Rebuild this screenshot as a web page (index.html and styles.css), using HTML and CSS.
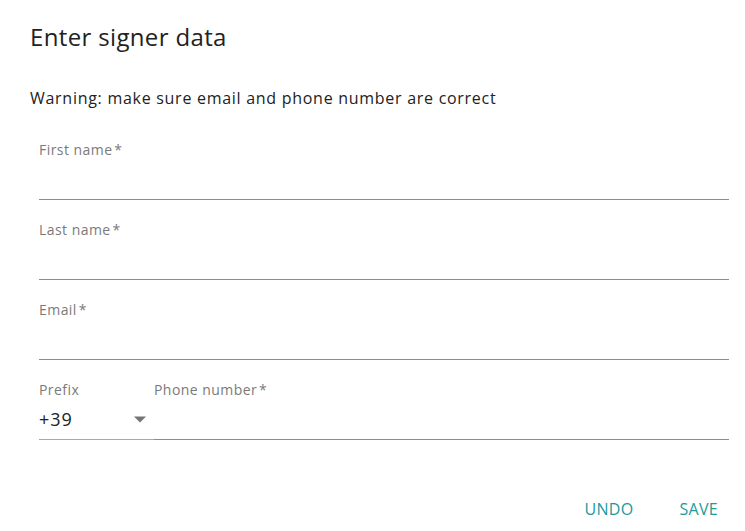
FILE: index.html
```html
<!DOCTYPE html>
<html lang="en">
<head>
<meta charset="utf-8">
<title>Enter signer data</title>
<link rel="stylesheet" href="styles.css">
</head>
<body>
<div class="dialog">
  <h1 class="title">Enter signer data</h1>
  <p class="warning">Warning: make sure email and phone number are correct</p>
  <div class="form">
    <div class="field">
      <div class="label">First name&#8202;*</div>
      <div class="input"></div>
    </div>
    <div class="field">
      <div class="label">Last name&#8202;*</div>
      <div class="input"></div>
    </div>
    <div class="field">
      <div class="label">Email&#8202;*</div>
      <div class="input"></div>
    </div>
    <div class="row">
      <div class="field prefix">
        <div class="label">Prefix</div>
        <div class="input select">
          <span class="value">+39</span>
          <svg class="arrow" width="14" height="7" viewBox="0 0 14 7"><path d="M1 0.5 L13 0.5 L7 6.5 Z" fill="#757575"/></svg>
        </div>
      </div>
      <div class="field phone">
        <div class="label">Phone number&#8202;*</div>
        <div class="input"></div>
      </div>
    </div>
  </div>
  <div class="actions">
    <button class="btn">UNDO</button>
    <button class="btn">SAVE</button>
  </div>
</div>
</body>
</html>
```

FILE: styles.css
```css
html, body {
  margin: 0;
  padding: 0;
  background: #ffffff;
  font-family: "Open Sans", "Noto Sans", sans-serif;
  color: #222222;
}

.dialog {
  width: 745px;
  box-sizing: border-box;
  padding: 21px 16px 0 30px;
}

.title {
  margin: 0;
  font-size: 24px;
  line-height: 32px;
  font-weight: 400;
  letter-spacing: 0.35px;
  color: #222222;
}

.warning {
  margin: 33px 0 0 0;
  font-size: 16px;
  line-height: 24px;
  letter-spacing: 0.72px;
  color: #222222;
}

.form {
  margin-top: 20px;
  padding-left: 9px;
  display: flex;
  flex-direction: column;
  gap: 10px;
}

.field {
  padding-top: 10px;
  display: flex;
  flex-direction: column;
}

.label {
  font-size: 14px;
  line-height: 20px;
  letter-spacing: 0.45px;
  color: #7a7a7a;
}

.input {
  height: 39px;
  border-bottom: 1px solid #8c8c8c;
}

.row {
  display: flex;
}

.prefix {
  width: 115px;
  flex: none;
}

.prefix .input {
  border-bottom-color: #a8a8a8;
}

.phone {
  flex: 1;
}

.select {
  display: flex;
  align-items: flex-start;
  justify-content: space-between;
}

.value {
  margin-top: 4px;
  font-size: 18px;
  line-height: 30px;
  letter-spacing: 1px;
  color: #222222;
}

.arrow {
  margin-top: 16px;
  margin-right: 7px;
}

.actions {
  margin-top: 51px;
  display: flex;
  justify-content: flex-end;
  gap: 30px;
  padding-right: 3px;
}

.btn {
  border: none;
  background: none;
  padding: 0 8px;
  height: 36px;
  font-family: "Open Sans", "Noto Sans", sans-serif;
  font-size: 16px;
  letter-spacing: 0.3px;
  color: #22999a;
  cursor: pointer;
}
```
